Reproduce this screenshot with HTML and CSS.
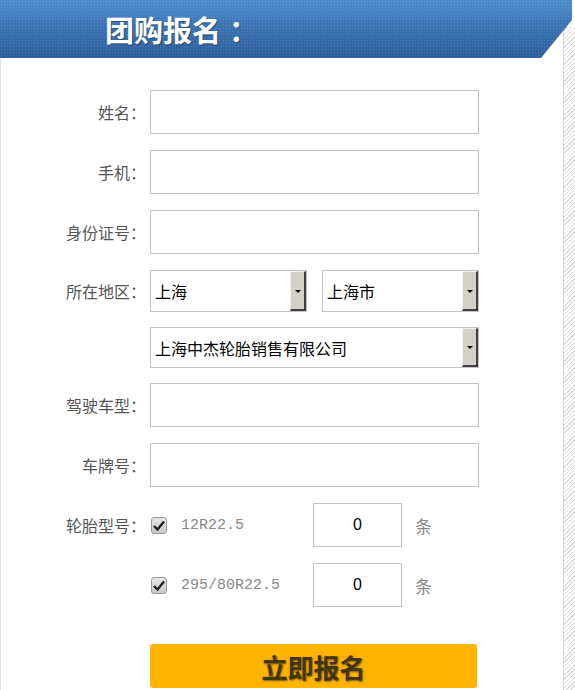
FILE: index.html
```html
<!DOCTYPE html>
<html>
<head>
	<meta charset="utf-8">
	<title>团购报名</title>
	<link rel="stylesheet" href="styles.css">
</head>
<body>
<div class="page">
	<div class="main">
		<div class="head"><h1>团购报名<span class="colon">：</span></h1></div>

		<form class="signup">
			<div class="row">
				<label class="lbl" for="name">姓名：</label>
				<input class="txt" type="text" id="name">
			</div>
			<div class="row">
				<label class="lbl" for="phone">手机：</label>
				<input class="txt" type="text" id="phone">
			</div>
			<div class="row">
				<label class="lbl" for="idcard">身份证号：</label>
				<input class="txt" type="text" id="idcard">
			</div>
			<div class="row row-sel">
				<label class="lbl">所在地区：</label>
				<div class="sel sel-half">
					<select><option>上海</option></select>
					<span class="arrow"></span>
				</div>
				<div class="sel sel-half">
					<select><option>上海市</option></select>
					<span class="arrow"></span>
				</div>
			</div>
			<div class="row row-sel">
				<span class="lbl"></span>
				<div class="sel sel-full">
					<select><option>上海中杰轮胎销售有限公司</option></select>
					<span class="arrow"></span>
				</div>
			</div>
			<div class="row">
				<label class="lbl" for="car">驾驶车型：</label>
				<input class="txt" type="text" id="car">
			</div>
			<div class="row">
				<label class="lbl" for="plate">车牌号：</label>
				<input class="txt" type="text" id="plate">
			</div>
			<div class="row row-tire">
				<span class="lbl">轮胎型号：</span>
				<span class="check"><svg width="12" height="11" viewBox="0 0 12 11"><path d="M1 6 L4.5 9.5 L11 1.5" fill="none" stroke="#222" stroke-width="2.4"/></svg></span>
				<span class="tire">12R22.5</span>
				<input class="num" type="text" value="0">
				<span class="unit">条</span>
			</div>
			<div class="row row-tire">
				<span class="lbl"></span>
				<span class="check"><svg width="12" height="11" viewBox="0 0 12 11"><path d="M1 6 L4.5 9.5 L11 1.5" fill="none" stroke="#222" stroke-width="2.4"/></svg></span>
				<span class="tire">295/80R22.5</span>
				<input class="num" type="text" value="0">
				<span class="unit">条</span>
			</div>
			<div class="row row-btn">
				<span class="lbl"></span>
				<button type="button" class="submit">立即报名</button>
			</div>
		</form>
	</div>
	<div class="side"></div>
</div>
</body>
</html>
```

FILE: styles.css
```css
body {
    margin: 0;
    font-family: "Noto Sans CJK SC", sans-serif;
    background: #fff;
}

.page {
    display: flex;
    height: 690px;
    overflow: hidden;
}

.main {
    width: 563px;
    border-left: 1px solid #e2e2e2;
    box-sizing: border-box;
}

.side {
    flex: 1;
    margin-top: 27px;
    border-left: 1px solid #d8d8d8;
    background: repeating-linear-gradient(135deg, #fff 0, #fff 2px, #dcdcdc 2px, #dcdcdc 3px);
}

.head {
    position: relative;
    z-index: 1;
    width: 572px;
    height: 58px;
    margin-left: -1px;
    margin-right: -10px;
    background:
        radial-gradient(circle, rgba(255,255,255,0.12) 0.6px, transparent 1px) 0 0 / 3px 3px,
        linear-gradient(#4d8dcd, #3a72b2 50%, #2d5e9b);
    clip-path: polygon(0 0, 572px 0, 572px 20px, 541px 58px, 0 58px);
}

.head h1 {
    margin: 0;
    padding-left: 105px;
    line-height: 58px;
    font-size: 29px;
    font-weight: bold;
    color: #fff;
    text-shadow: 1px 1px 1px rgba(0,0,0,0.35);
}

.head .colon {
    margin-left: 8px;
}

.signup {
    padding-top: 32px;
}

.row {
    display: flex;
    align-items: center;
    margin-bottom: 16px;
}

.row-sel {
    margin-bottom: 15px;
}

.lbl {
    width: 145px;
    flex: none;
    padding-right: 4px;
    text-align: right;
    font-size: 16px;
    color: #555;
}

.txt {
    width: 329px;
    height: 44px;
    box-sizing: border-box;
    border: 1px solid #c4c4c4;
    padding: 0 6px;
    font-size: 16px;
    outline: none;
}

.sel {
    position: relative;
    height: 41px;
    box-sizing: border-box;
    border: 1px solid #c4c4c4;
}

.sel-half {
    width: 157px;
    height: 42px;
}

.sel-half + .sel-half {
    margin-left: 15px;
}

.sel-full {
    width: 329px;
}

.sel select {
    appearance: none;
    -webkit-appearance: none;
    width: 100%;
    height: 100%;
    border: none;
    background: #fff;
    padding: 0 0 0 4px;
    font-family: "Noto Sans CJK SC", sans-serif;
    font-size: 16px;
    color: #000;
    outline: none;
}

.arrow {
    position: absolute;
    top: 0;
    right: 0;
    width: 16px;
    height: 100%;
    box-sizing: border-box;
    background: #d4d0c8;
    border-top: 1px solid #f4f2ee;
    border-left: 1px solid #f4f2ee;
    border-right: 2px solid #404040;
    border-bottom: 2px solid #404040;
    pointer-events: none;
}

.arrow::after {
    content: "";
    position: absolute;
    left: 4px;
    top: 50%;
    margin-top: -1px;
    border-left: 3px solid transparent;
    border-right: 3px solid transparent;
    border-top: 3px solid #000;
}

.row-tire .lbl {
    padding-right: 5px;
}

.check {
    display: flex;
    align-items: center;
    justify-content: center;
    width: 16px;
    height: 17px;
    box-sizing: border-box;
    border: 1px solid #9a9a9a;
    border-radius: 3px;
    background: linear-gradient(#e6e6e6, #c8c8c8);
}

.tire {
    width: 132px;
    margin-left: 14px;
    font-family: "Liberation Mono", monospace;
    font-size: 15px;
    color: #888;
}

.num {
    width: 89px;
    height: 44px;
    box-sizing: border-box;
    border: 1px solid #c4c4c4;
    text-align: center;
    font-family: "Liberation Sans", Arial, sans-serif;
    font-size: 16px;
    color: #000;
    outline: none;
}

.unit {
    margin-left: 13px;
    font-size: 17px;
    color: #888;
}

.row-tire + .row-tire {
    margin-bottom: 37px;
}

.submit {
    width: 327px;
    height: 44px;
    border: none;
    border-radius: 3px;
    background: #ffb400;
    font-family: "Noto Sans CJK SC", sans-serif;
    font-size: 26px;
    font-weight: bold;
    color: #43350a;
    text-shadow: 1px 1px 2px rgba(0,0,0,0.5);
    padding: 0;
    cursor: pointer;
}
```
